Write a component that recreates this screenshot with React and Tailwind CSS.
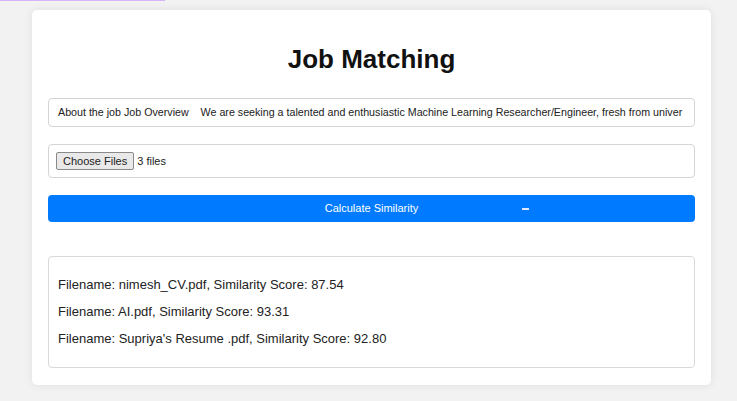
const JOB_TEXT =
  'About the job Job Overview    We are seeking a talented and enthusiastic Machine Learning Researcher/Engineer, fresh from univer'

const RESULTS = [
  { file: 'nimesh_CV.pdf', score: '87.54' },
  { file: 'AI.pdf', score: '93.31' },
  { file: "Supriya's Resume .pdf", score: '92.80' },
]

export default function App() {
  return (
    <div className="relative min-h-[401px] w-[737px] bg-[#f2f2f2] pt-[10px] pb-[16px] font-['Liberation_Sans',Arial,sans-serif]">
      {/* top progress line */}
      <div className="absolute left-0 top-0 h-[1px] w-[165px] bg-[#d6b4fb]" />

      <div className="ml-[32px] w-[679px] rounded-[5px] bg-white px-[16px] pt-[34px] pb-[17px] shadow-[0_0_10px_rgba(0,0,0,0.08)]">
        <h1 className="text-center text-[26px] font-bold leading-[30px] text-[#111]">Job Matching</h1>

        <div className="mt-[24px] flex h-[29px] items-center overflow-hidden rounded-[4px] border border-[#d4d4d4] px-[9px]">
          <span className="whitespace-pre text-[10.7px] text-[#222]">{JOB_TEXT}</span>
        </div>

        <div className="mt-[17px] flex h-[34px] items-center rounded-[4px] border border-[#d4d4d4] px-[7px] text-[11px] text-[#222]">
          <span className="flex h-[18px] items-center rounded-[2px] border border-[#8a8a8a] bg-[#e9e9e9] px-[6px] leading-none">
            Choose Files
          </span>
          <span className="ml-[3px]">3 files</span>
        </div>

        <button className="relative mt-[17px] flex h-[27px] w-full items-center justify-center rounded-[4px] bg-[#007bff] text-[11px] text-white">
          Calculate Similarity
          <span className="absolute left-[474px] top-[13px] h-[2px] w-[7px] bg-[#dfe9ff]" />
        </button>

        <div className="mt-[34px] flex flex-col gap-[10px] rounded-[4px] border border-[#d9d9d9] px-[9px] pt-[19px] pb-[20px]">
          {RESULTS.map(r => (
            <p key={r.file} className="text-[13px] leading-[17px] text-[#222]">
              Filename: {r.file}, Similarity Score: {r.score}
            </p>
          ))}
        </div>
      </div>
    </div>
  )
}
